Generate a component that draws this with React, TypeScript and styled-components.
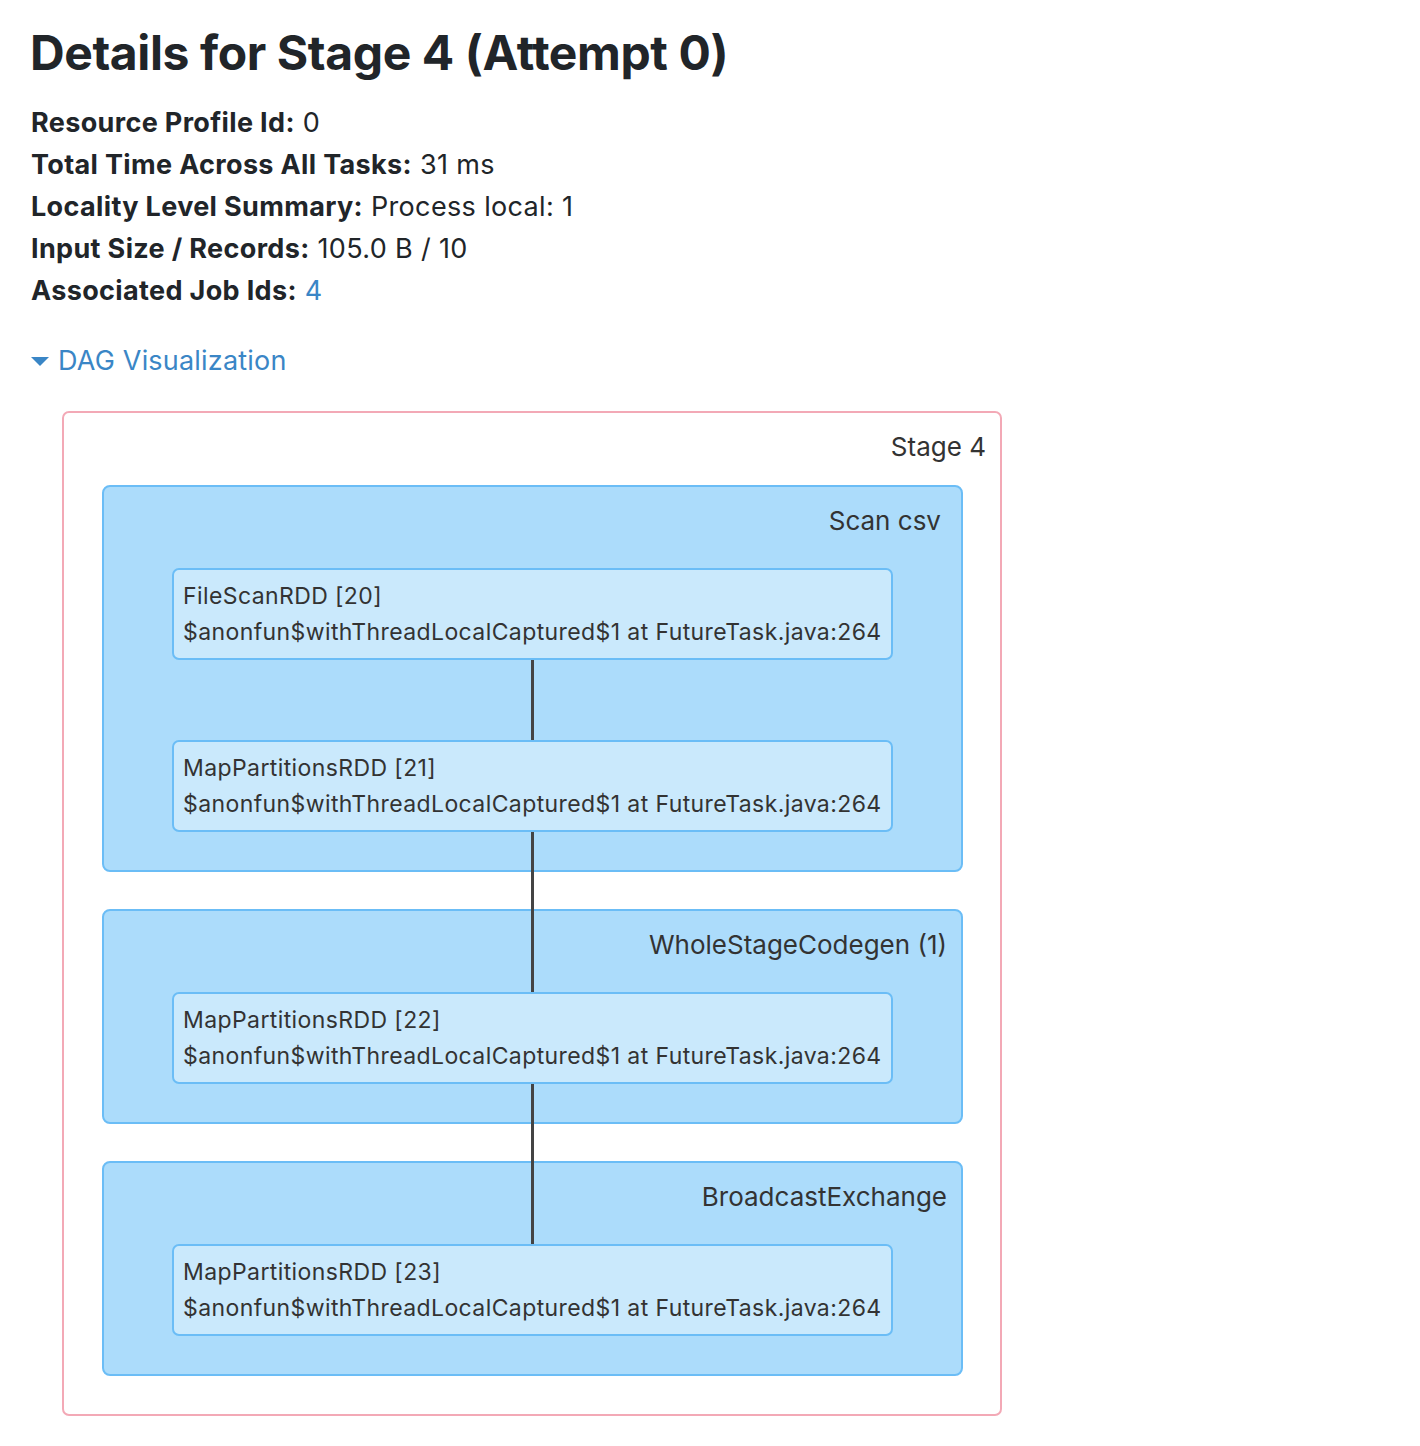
import React from "react";
import styled, { createGlobalStyle } from "styled-components";

const GlobalStyle = createGlobalStyle`
  body {
    margin: 0;
    background: #ffffff;
    font-family: Inter, "Liberation Sans", Arial, sans-serif;
    color: #212529;
  }
`;

type RddNode = { name: string; callSite: string };
type Cluster = { label: string; labelInset: number; nodes: RddNode[] };

const callSite = "$anonfun$withThreadLocalCaptured$1 at FutureTask.java:264";

const clusters: Cluster[] = [
  {
    label: "Scan csv",
    labelInset: 22,
    nodes: [
      { name: "FileScanRDD [20]", callSite },
      { name: "MapPartitionsRDD [21]", callSite },
    ],
  },
  {
    label: "WholeStageCodegen (1)",
    labelInset: 16,
    nodes: [{ name: "MapPartitionsRDD [22]", callSite }],
  },
  {
    label: "BroadcastExchange",
    labelInset: 16,
    nodes: [{ name: "MapPartitionsRDD [23]", callSite }],
  },
];

const summary = [
  { label: "Resource Profile Id:", value: "0" },
  { label: "Total Time Across All Tasks:", value: "31 ms" },
  { label: "Locality Level Summary:", value: "Process local: 1" },
  { label: "Input Size / Records:", value: "105.0 B / 10" },
  { label: "Associated Job Ids:", value: "4", link: true },
];

export default function App() {
  // edge length below each node, down to the next node (last one has none)
  const flat = clusters.flatMap((c) => c.nodes);
  let idx = 0;

  return (
    <Page>
      <GlobalStyle />
      <Title>Details for Stage 4 (Attempt 0)</Title>
      <Summary>
        {summary.map((s) => (
          <li key={s.label}>
            <strong>{s.label}</strong>{" "}
            {s.link ? <Link href="#">{s.value}</Link> : s.value}
          </li>
        ))}
      </Summary>

      <Toggle href="#">
        <Caret />
        DAG Visualization
      </Toggle>

      <StageBox>
        <StageLabel>Stage 4</StageLabel>
        <ClusterList>
          {clusters.map((c) => (
            <ClusterBox key={c.label}>
              <ClusterLabel $inset={c.labelInset}>{c.label}</ClusterLabel>
              <NodeStack>
                {c.nodes.map((n, ni) => {
                  const i = idx++;
                  const isLast = i === flat.length - 1;
                  const tail = isLast ? 0 : ni < c.nodes.length - 1 ? 80 : 160;
                  return (
                    <Node key={n.name} $tail={tail}>
                      <div>{n.name}</div>
                      <div>{n.callSite}</div>
                    </Node>
                  );
                })}
              </NodeStack>
            </ClusterBox>
          ))}
        </ClusterList>
      </StageBox>
    </Page>
  );
}

const Page = styled.div`
  padding: 28px 30px 30px;
  min-height: 100vh;
  box-sizing: border-box;
`;

const Title = styled.h3`
  margin: 0;
  font-size: 48px;
  line-height: 50px;
  font-weight: 700;
  color: #212529;
  letter-spacing: -0.4px;
`;

const Summary = styled.ul`
  list-style: none;
  margin: 24px 0 0;
  padding: 0 0 0 1px;
  font-size: 27px;
  line-height: 42px;
  letter-spacing: 0.35px;
  color: #212529;

  strong {
    font-weight: 700;
  }
`;

const Link = styled.a`
  color: #3a86c6;
  text-decoration: none;
`;

const Toggle = styled.a`
  display: flex;
  align-items: center;
  gap: 9px;
  margin-top: 28px;
  padding-left: 1px;
  font-size: 27px;
  line-height: 42px;
  letter-spacing: 0.2px;
  color: #3a86c6;
  text-decoration: none;
  width: max-content;
`;

const Caret = styled.span`
  width: 0;
  height: 0;
  border-left: 9px solid transparent;
  border-right: 9px solid transparent;
  border-top: 9px solid #3a86c6;
`;

const StageBox = styled.div`
  margin: 29px 0 0 32px;
  width: 940px;
  box-sizing: border-box;
  border: 2px solid #f3a9b6;
  border-radius: 7px;
  padding: 0 14px 38px 38px;
  color: #333333;
`;

const StageLabel = styled.div`
  text-align: right;
  font-size: 26px;
  line-height: 30px;
  padding-top: 19px;
  height: 72px;
  box-sizing: border-box;
`;

const ClusterList = styled.div`
  display: flex;
  flex-direction: column;
  gap: 37px;
  padding-right: 24px;
`;

const ClusterBox = styled.div`
  box-sizing: border-box;
  width: 861px;
  background: #acdcfb;
  border: 2px solid #6bbdf6;
  border-radius: 8px;
  padding: 0 68px 38px;
`;

const ClusterLabel = styled.div<{ $inset: number }>`
  text-align: right;
  font-size: 26px;
  line-height: 30px;
  padding-top: 19px;
  height: 81px;
  box-sizing: border-box;
  margin-right: ${(p) => p.$inset - 70}px;
`;

const NodeStack = styled.div`
  display: flex;
  flex-direction: column;
  gap: 80px;
`;

const Node = styled.div<{ $tail: number }>`
  position: relative;
  box-sizing: border-box;
  height: 92px;
  background: #cae9fc;
  border: 2px solid #6bbdf6;
  border-radius: 7px;
  padding: 8px 8px 8px 9px;
  font-size: 23px;
  line-height: 36px;
  letter-spacing: 0.4px;
  color: #333333;
  white-space: nowrap;

  &::after {
    content: "";
    display: ${(p) => (p.$tail ? "block" : "none")};
    position: absolute;
    left: 50%;
    top: 100%;
    margin: 2px 0 0 -1.5px;
    width: 3px;
    height: ${(p) => p.$tail}px;
    background: #444444;
  }
`;
